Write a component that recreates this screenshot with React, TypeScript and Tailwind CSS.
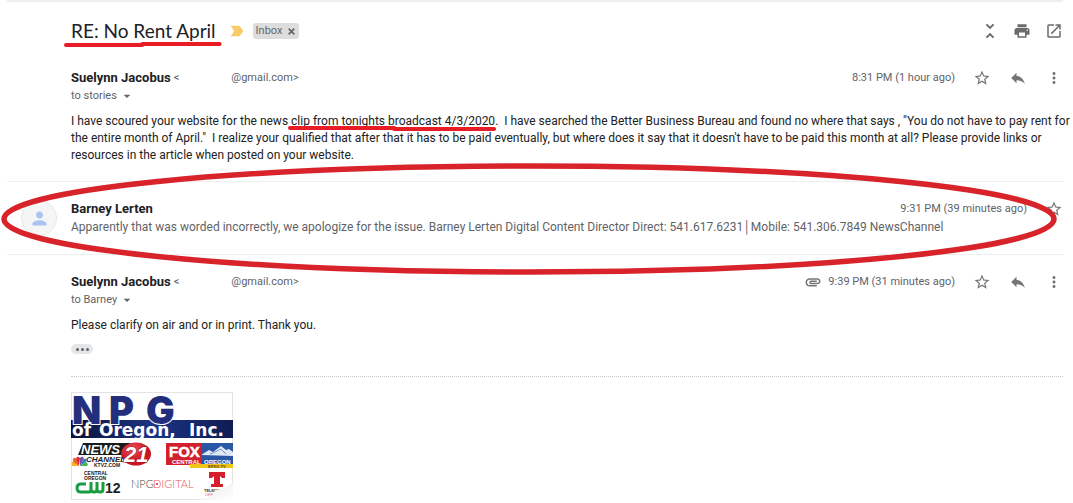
import { ReactNode } from "react";
import {
    MdArrowDropDown,
    MdAttachment,
    MdLabelImportant,
    MdMoreVert,
    MdOpenInNew,
    MdPerson,
    MdPrint,
    MdReply,
    MdStarBorder,
    MdUnfoldLess,
} from "react-icons/md";

export default function App() {
    return (
        <main className="relative bg-white pl-[7px] pr-[10px] pb-1 font-[Roboto,sans-serif] text-[11px] text-[#5f6368]">

            {/* Subject line */}
            <header className="flex items-center border-t-2 border-[#efefef] pt-[13px] pb-[13px] pl-16">
                <h1 className="relative font-[Lato,sans-serif] text-[19px] leading-8 text-[#202124]">
                    RE: No Rent April
                    <Underline className="-left-[7px] -right-[6px] top-[27px] h-[5px]" d="M2 3 L78 3 L78 2 L155 2" box="0 0 157 5" />
                </h1>
                <MdLabelImportant className="ml-3 size-[18px] text-[#f7cb69]" />
                <span className="ml-[7px] flex h-4 items-center rounded-[3px] bg-[#dddddd] pl-[3px] pr-1 text-[#666666]">
                    Inbox
                    <button aria-label="Remove label Inbox" className="ml-[6px]">
                        <svg className="size-[7px]" viewBox="0 0 7 7" stroke="#666" strokeWidth="1.7">
                            <path d="M.7 .7 6.3 6.3M6.3 .7.7 6.3" />
                        </svg>
                    </button>
                </span>
                <div className="ml-auto -mr-[3px] flex gap-2">
                    <HeaderButton label="Collapse all"><MdUnfoldLess className="size-[22px]" /></HeaderButton>
                    <HeaderButton label="Print all"><MdPrint className="size-[18px]" /></HeaderButton>
                    <HeaderButton label="In new window"><MdOpenInNew className="size-[18px]" /></HeaderButton>
                </div>
            </header>

            {/* First message */}
            <article className="pl-16 pt-[9px] pb-[17px]">
                <MessageHead to="stories" time="8:31 PM (1 hour ago)" />
                <p className="mt-2 -mr-[10px] text-xs leading-[17px] text-[#222222]">
                    I have scoured your website for the news{" "}
                    <span className="relative">
                        clip from tonights broadcast 4/3/2020
                        <Underline className="-left-[3px] -right-[1px] top-[12px] h-[5px]" d="M2 2 L100 2 L100 3 L194 3" box="0 0 196 5" />
                    </span>
                    .&nbsp; I have searched the Better Business Bureau and found no where that says , "You do not have to pay rent for the entire month of April."&nbsp; I realize your qualified that after that it has to be paid eventually, but where does it say that it doesn't have to be paid this month at all? Please provide links or resources in the article when posted on your website.
                </p>
            </article>

            {/* Collapsed reply, circled */}
            <article className="relative flex items-center border-y border-[#efefef] py-[18px]">
                <div className="ml-[14px] mr-[14px] flex size-9 shrink-0 items-center justify-center rounded-full border border-[#e8e8e8] bg-[#f5f5f5]">
                    <MdPerson className="size-[21px] text-[#a9c3f3]" />
                </div>
                <div className="min-w-0 flex-1">
                    <div className="flex h-[18px] items-center justify-between">
                        <h2 className="text-[13px] font-bold text-[#202124]">Barney Lerten</h2>
                        <div className="flex items-center gap-[18px]">
                            <time>9:31 PM (39 minutes ago)</time>
                            <IconButton label="Star"><MdStarBorder /></IconButton>
                        </div>
                    </div>
                    <p className="truncate text-xs leading-[18px]">
                        Apparently that was worded incorrectly, we apologize for the issue. Barney Lerten Digital Content Director Direct: 541.617.6231│Mobile: 541.306.7849 NewsChannel
                    </p>
                </div>
                <svg className="pointer-events-none absolute -left-[7px] -right-[10px] -top-[21px] h-[115px] w-[calc(100%+17px)]" viewBox="0 0 1073 115" preserveAspectRatio="none" fill="none">
                    <ellipse cx="529" cy="58" rx="525" ry="53" stroke="#d8232a" strokeWidth="5.5" vectorEffect="non-scaling-stroke" />
                </svg>
            </article>

            {/* Last message */}
            <article className="pl-16 pt-[18px]">
                <MessageHead to="Barney" time="9:39 PM (31 minutes ago)" attachment />
                <p className="mt-2 text-xs leading-[17px] text-[#222222]">
                    Please clarify on air and or in print. Thank you.
                </p>
                <button aria-label="Show trimmed content" className="mt-[10px] flex h-[10px] w-[22px] items-center justify-center gap-[2px] rounded-full bg-[#e4e5e7]">
                    <i className="size-[3px] rounded-full bg-[#5f6368]" />
                    <i className="size-[3px] rounded-full bg-[#5f6368]" />
                    <i className="size-[3px] rounded-full bg-[#5f6368]" />
                </button>
                <div className="mt-[22px] border-t border-dotted border-[#c8c8c8] pt-[15px]">
                    <a href="#attachment" className="block w-[162px]" aria-label="Attachment">
                        <StationLogos />
                    </a>
                </div>
            </article>
        </main>
    );
}

function MessageHead({ to, time, attachment = false }: { to: string, time: string, attachment?: boolean }) {
    return (
        <div className="flex items-start justify-between">
            <div>
                <h2 className="flex h-[18px] items-center">
                    <span className="text-[13px] font-bold text-[#202124]">Suelynn Jacobus</span>
                    <span className="ml-[3px]">&lt;</span>
                    <span className="ml-[52px]">@gmail.com&gt;</span>
                </h2>
                <button className="flex h-[18px] items-center">
                    to {to}
                    <MdArrowDropDown className="ml-[2px] size-4" />
                </button>
            </div>
            <div className="flex h-[18px] items-center gap-[18px]">
                <span className="flex items-center gap-[6px]">
                    {attachment && <MdAttachment className="size-[18px] text-[#757575]" />}
                    <time>{time}</time>
                </span>
                <IconButton label="Star"><MdStarBorder /></IconButton>
                <IconButton label="Reply"><MdReply /></IconButton>
                <IconButton label="More"><MdMoreVert /></IconButton>
            </div>
        </div>
    );
}

function IconButton({ label, children }: { label: string, children: ReactNode }) {
    return (
        <button aria-label={label} className="text-[18px] text-[#757575]">
            {children}
        </button>
    );
}

function HeaderButton({ label, children }: { label: string, children: ReactNode }) {
    return (
        <button aria-label={label} className="flex size-6 items-center justify-center text-[#6b6b6b]">
            {children}
        </button>
    );
}

// Red marker stroke below a piece of text
function Underline({ className, d, box }: { className: string, d: string, box: string }) {
    return (
        <span className={"absolute block " + className}>
            <svg className="block size-full" viewBox={box} preserveAspectRatio="none" fill="none">
                <path d={d} stroke="#e81c24" strokeWidth="4" strokeLinecap="round" strokeLinejoin="round" />
            </svg>
        </span>
    );
}

function StationLogos() {
    return (
        <svg viewBox="0 0 162 108" className="block w-full overflow-visible">
            <defs>
                <linearGradient id="band" x1="0" x2="1">
                    <stop offset="0" stopColor="#0c1238" />
                    <stop offset=".5" stopColor="#1c3484" />
                    <stop offset="1" stopColor="#101c54" />
                </linearGradient>
                <linearGradient id="curl" x1="0" y1="0" x2="1" y2="1">
                    <stop offset="0" stopColor="#a8a8a8" />
                    <stop offset=".5" stopColor="#f4f4f4" />
                    <stop offset="1" stopColor="#fff" />
                </linearGradient>
                <radialGradient id="ball" cx=".4" cy=".3">
                    <stop offset="0" stopColor="#f0525a" />
                    <stop offset="1" stopColor="#c81624" />
                </radialGradient>
            </defs>
            <rect x=".5" y=".5" width="161" height="107" fill="#fff" stroke="#e4e4e4" />

            {/* NPG banner */}
            <rect y="28" width="162" height="18" fill="url(#band)" />
            <g fontFamily="Inter, sans-serif" fontWeight="900" fontSize="38" fill="#232f7c" stroke="#fff" strokeWidth="2" paintOrder="stroke">
                <text x="1" y="32">N</text>
                <text x="38" y="32">P</text>
                <text x="75" y="32">G</text>
            </g>
            <g fontFamily="'DejaVu Sans', sans-serif" fontWeight="bold" fontSize="17" fill="#fff">
                <text x="1" y="44">of</text>
                <text x="28" y="44">Oregon,</text>
                <text x="118" y="44">Inc.</text>
            </g>

            {/* NewsChannel 21 */}
            <path d="M12 51H60L54 63H7z" fill="#1c1c1c" />
            <ellipse cx="65" cy="62" rx="15" ry="11.5" fill="url(#ball)" />
            <g fontFamily="Liberation Sans" fontWeight="bold" fontStyle="italic">
                <text x="10" y="62" fontSize="13" fill="#fff">NEWS</text>
                <text x="15" y="70" fontSize="8" fill="#222">CHANNEL</text>
                <text x="53" y="70" fontSize="22" fill="#fff" stroke="#a81420" strokeWidth="1" paintOrder="stroke">21</text>
            </g>
            <text x="23" y="75" fontSize="5" fontFamily="Liberation Sans" fontWeight="bold" fill="#222">KTVZ.COM</text>
            <path d="M8 74 1 74Q-1 69 4 70z" fill="#f6b723" />
            <path d="M8 74 2 70Q1 65 5 66z" fill="#ee6b23" />
            <path d="M8 74 5 67Q6 63 9 66z" fill="#d92b3a" />
            <path d="M9 74 9 66Q12 63 13 67z" fill="#7a52a5" />
            <path d="M9 74 13 67Q17 66 15 70z" fill="#2c7fc4" />
            <path d="M9 74 15 70Q18 72 16 74z" fill="#4bb24d" />

            {/* Fox Central Oregon */}
            <rect x="95" y="51" width="67" height="22" fill="#2a56a6" />
            <path d="M130 63 138 58 142 60 150 54 155 58 158 57 162 60V64z" fill="#dfe9f6" />
            <path d="M139 62 144 60 150 57 155 62" fill="none" stroke="#7394c8" />
            <rect x="95" y="51" width="36" height="22" fill="#d2202c" />
            <rect x="119" y="72" width="43" height="4" fill="#f3c519" />
            <g fontFamily="Liberation Sans" fontWeight="bold" fill="#fff">
                <text x="98" y="65" fontSize="15" stroke="#fff" strokeWidth=".5">FOX</text>
                <text x="101" y="72" fontSize="6">CENTRAL</text>
                <text x="133" y="72" fontSize="6">OREGON</text>
                <text x="137" y="76" fontSize="4" fill="#4a3b10">KFXO-TV</text>
            </g>

            {/* CW 12 */}
            <g fontFamily="Liberation Sans" fontWeight="bold" fill="#222">
                <text x="13" y="83" fontSize="5">CENTRAL</text>
                <text x="13" y="88" fontSize="5">OREGON</text>
                <text x="34" y="101" fontSize="14">12</text>
            </g>
            <path d="M15 92H10Q6 92 6 96Q6 100 10 100H18Q20 100 20 97V90M20 96V97Q20 100 23 100Q26 100 26 97V90M26 97Q26 100 29 100Q32 100 32 97V90" fill="none" stroke="#1b9c43" strokeWidth="3" />

            {/* NPG Digital */}
            <g fontFamily="Lato" fontWeight="300" fontSize="11">
                <text x="60" y="96" fill="#444">NPG</text>
                <text x="82" y="96" fill="#e5545b">DIGITAL</text>
            </g>
            <circle cx="86" cy="92" r="1" fill="#c22" />

            {/* Telemundo */}
            <path d="M138 80H154V86H151L149 84V92H152V95H140V92H143V84L141 86H138z" fill="#d4202c" />
            <text x="133" y="100" fontSize="4" fontFamily="Liberation Sans" fontWeight="bold" fill="#333">TELEMUNDO</text>
            <text x="134" y="104" fontSize="4" fontFamily="Liberation Sans" fill="#d9555c">OREGON</text>

            {/* Folded corner */}
            <path d="M126 108Q144 105 144 98Q154 97 162 90V108z" fill="url(#curl)" />
        </svg>
    );
}
